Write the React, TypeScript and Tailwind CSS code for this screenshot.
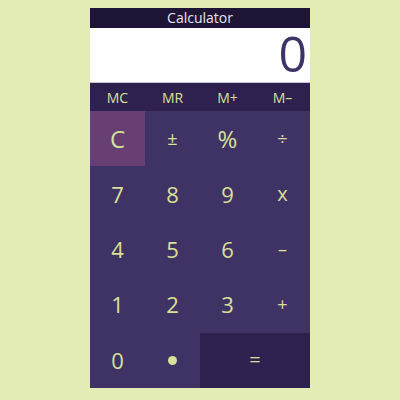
import React from 'react';

const keys: { label: string; cls?: string; text?: string }[] = [
  { label: 'C', cls: 'bg-[#673f72]', text: 'text-[24px]' },
  { label: '±', text: 'text-[18px]' },
  { label: '%', text: 'text-[24px]' },
  { label: '÷', text: 'text-[18px]' },
  { label: '7' },
  { label: '8' },
  { label: '9' },
  { label: 'x', text: 'text-[20px]' },
  { label: '4' },
  { label: '5' },
  { label: '6' },
  { label: '–', text: 'text-[18px]' },
  { label: '1' },
  { label: '2' },
  { label: '3' },
  { label: '+', text: 'text-[18px]' },
];

export default function App() {
  return (
    <div className="w-[400px] h-[400px] bg-[#e3ecb4] flex justify-center pt-[8px] font-['Open_Sans',sans-serif]">
      <div className="w-[220px] h-[380px] flex flex-col">
        <div className="h-[20px] bg-[#1e1436] text-[#e9e4f0] text-[14px] leading-[20px] text-center">
          Calculator
        </div>
        <div className="h-[55px] bg-white border-b border-[#c9c6cf] flex items-end justify-end pr-[3px] pb-[4px]">
          <span className="text-[50px] leading-none text-[#3f3264]">0</span>
        </div>
        <div className="h-[28px] bg-[#2e2150] grid grid-cols-4 text-[14px] text-[#d9e09a] items-center text-center">
          <span>MC</span>
          <span>MR</span>
          <span>M+</span>
          <span>M–</span>
        </div>
        <div className="grid grid-cols-4 grid-rows-5 flex-1 bg-[#3f3264] text-[#d9e09a]">
          {keys.map((k) => (
            <button
              key={k.label}
              className={`flex items-center justify-center ${k.cls ?? ''} ${k.text ?? 'text-[22px]'}`}
            >
              {k.label}
            </button>
          ))}
          <button className="flex items-center justify-center text-[22px]">0</button>
          <button className="flex items-center justify-center">
            <span className="w-[9px] h-[9px] rounded-full bg-[#d9e09a]" />
          </button>
          <button className="col-span-2 flex items-center justify-center bg-[#2e2150] text-[20px]">=</button>
        </div>
      </div>
    </div>
  );
}
